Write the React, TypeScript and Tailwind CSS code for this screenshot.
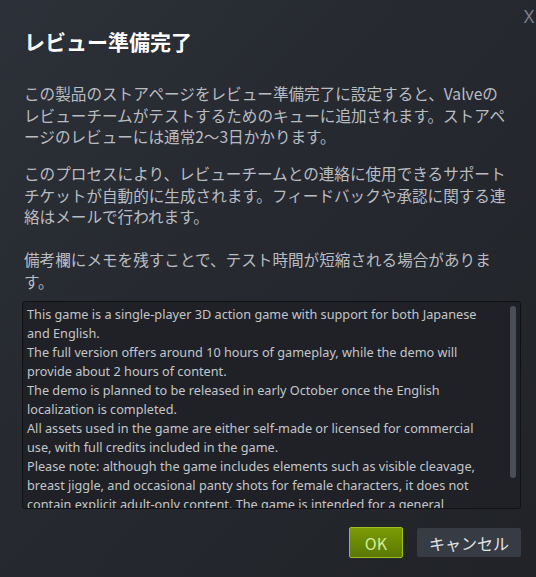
const notes = [
  "This game is a single-player 3D action game with support for both Japanese and English.",
  "The full version offers around 10 hours of gameplay, while the demo will provide about 2 hours of content.",
  "The demo is planned to be released in early October once the English localization is completed.",
  "All assets used in the game are either self-made or licensed for commercial use, with full credits included in the game.",
  "Please note: although the game includes elements such as visible cleavage, breast jiggle, and occasional panty shots for female characters, it does not contain explicit adult-only content. The game is intended for a general audience.",
]

const jp = "font-['Noto_Sans_CJK_JP','Noto_Sans',sans-serif]"

export default function App() {
  return (
    <div className={`relative w-[536px] h-[577px] overflow-hidden bg-gradient-to-br from-[#2c3038] via-[#25282e] to-[#212328] pl-[22px] pr-[15px] flex flex-col ${jp}`}>
      <button className="absolute top-[6px] right-[0px] w-[14px] text-[18px] leading-[20px] text-[#7c8088] font-['Noto_Sans',sans-serif]">X</button>

      <h1 className="pt-[27px] pl-[2px] text-[21px] leading-[28px] font-bold text-white">レビュー準備完了</h1>

      <div className="mt-[28px] pl-[2px] pr-[11px] text-[15.6px] leading-[21.5px] text-[#b9bdc2]">
        <p>この製品のストアページをレビュー準備完了に設定すると、Valveのレビューチームがテストするためのキューに追加されます。ストアページのレビューには通常2～3日かかります。</p>
        <p className="mt-[15.5px]">このプロセスにより、レビューチームとの連絡に使用できるサポートチケットが自動的に生成されます。フィードバックや承認に関する連絡はメールで行われます。</p>
        <p className="mt-[21.5px]">備考欄にメモを残すことで、テスト時間が短縮される場合があります。</p>
      </div>

      <div className="relative mt-[9px] h-[208px] rounded-[3px] border border-[#101114] bg-[#1f2126] overflow-hidden">
        <div className="pl-[4px] pr-[22px] pt-[3px] text-[12.7px] leading-[19px] text-[#c3c6ca] font-['Noto_Sans',sans-serif]">
          {notes.map((n, i) => (
            <p key={i}>{n}</p>
          ))}
        </div>
        <div className="absolute top-[4px] right-[4px] w-[6px] h-[172px] rounded-full bg-[#4a4f57]" />
      </div>

      <div className="mt-[18px] flex justify-end gap-[14px]">
        <button className="h-[31px] px-[15px] rounded-[2px] border border-[#9ebd1e] bg-gradient-to-b from-[#7b9b05] to-[#5b7902] text-[16px] text-[#d2ee95]">OK</button>
        <button className="h-[29px] mt-[1px] px-[12px] rounded-[2px] bg-[#363b44] text-[16px] text-[#e2e5e8]">キャンセル</button>
      </div>
    </div>
  )
}
